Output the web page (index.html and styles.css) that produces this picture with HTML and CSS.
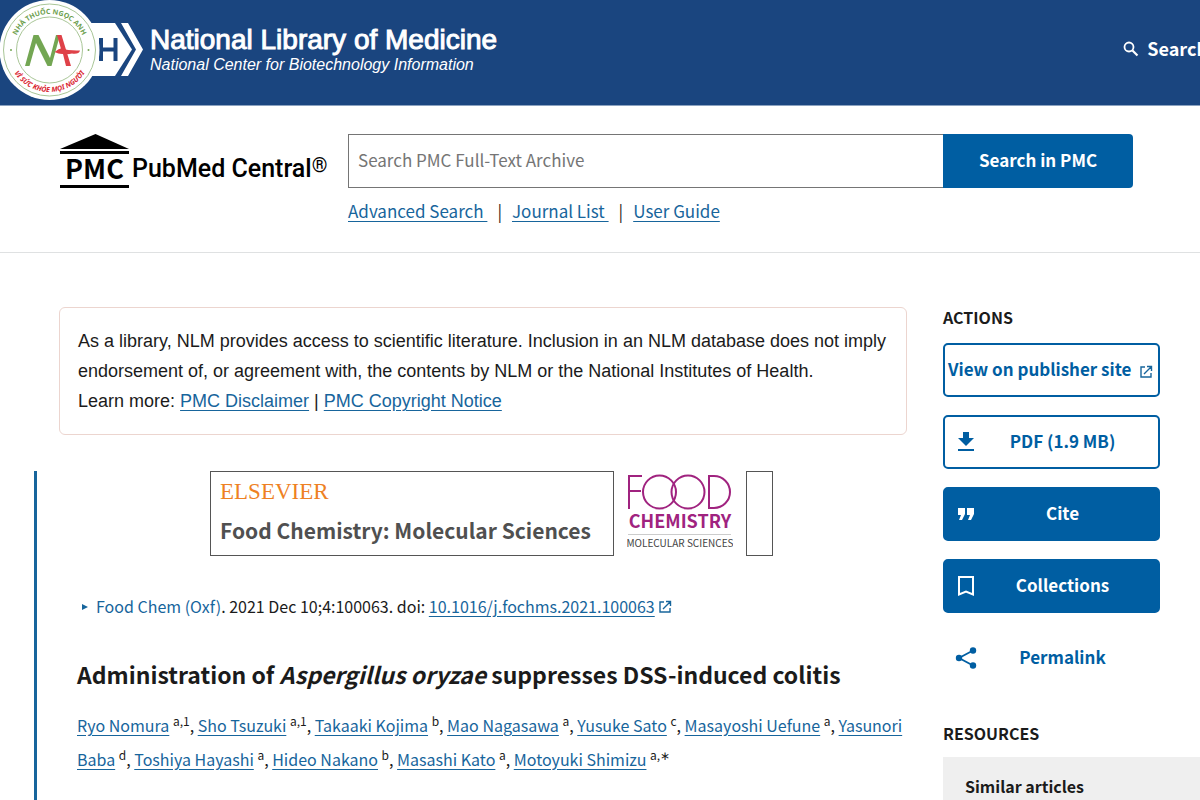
FILE: index.html
```html
<!DOCTYPE html>
<html lang="en">
<head>
<meta charset="utf-8">
<title>Administration of Aspergillus oryzae suppresses DSS-induced colitis - PMC</title>
<link rel="stylesheet" href="styles.css">
</head>
<body>
<header class="banner">
  <a class="brand" href="#">
    <svg class="nih-mark" viewBox="0 0 144 105" role="img" aria-label="NIH">
      <path d="M60 23H115L132 49.500L115 76H60Z" fill="#fff"/>
      <path d="M121 23H128L143 49.500L128 76H121L136 49.500Z" fill="#fff"/>
      <path d="M101 38V61M115.500 38V61M101 49.500H115.500" stroke="#1a457f" stroke-width="4"/>
      <circle cx="49.500" cy="50" r="50" fill="#fff"/>
      <circle cx="49.500" cy="50" r="46" fill="none" stroke="#a9c697" stroke-width="1"/>
      <circle cx="49.500" cy="50" r="33" fill="none" stroke="#a9c697" stroke-width="1"/>
      <path id="arc-top" d="M13.500 50A36 36 0 0 1 85.500 50" fill="none"/>
      <path id="arc-bottom" d="M7.500 50A42 42 0 0 0 91.500 50" fill="none"/>
      <text class="seal-green"><textPath href="#arc-top" startOffset="50%" text-anchor="middle">NHÀ THUỐC NGỌC ANH</textPath></text>
      <text class="seal-red"><textPath href="#arc-bottom" startOffset="50%" text-anchor="middle">VÌ SỨC KHỎE MỌI NGƯỜI</textPath></text>
      <circle cx="11" cy="50" r="1" fill="#73a653"/><circle cx="88.500" cy="50" r="1" fill="#73a653"/>
      <path d="M25 66L33.500 35H38.500L50 58L56 35H60L51.500 66H47.500L36 43L29.500 66Z" fill="#73a653"/>
      <path d="M57 35H61.500L71 66H66L63 54Q58 54 54.500 52L59 49H61Z" fill="#df4148"/>
      <path d="M60 48.500Q70 51 80 50.500Q79 54.500 72 53.500Q66 55 59 53Z" fill="#df4148"/>
    </svg>
    <span class="brand-text">
      <span class="brand-name">National Library of Medicine</span>
      <span class="brand-sub">National Center for Biotechnology Information</span>
    </span>
  </a>
  <a class="banner-search" href="#">
    <svg class="icon-search" viewBox="0 0 16 16" aria-hidden="true"><circle cx="6" cy="6" r="4.500" fill="none" stroke="currentColor" stroke-width="1.800"/><path d="M9.500 9.500L14.500 14.500" stroke="currentColor" stroke-width="2.200"/></svg>
    <span>Search</span>
  </a>
</header>

<section class="finder">
  <a class="pmc-logo" href="#" aria-label="PMC PubMed Central">
    <span class="pmc-temple">
      <svg viewBox="0 0 69 20" aria-hidden="true"><path d="M0 15L35.500 0L69 15Z"/><path d="M0 17H69V20H0Z"/></svg>
      <span class="pmc-word">PMC</span>
    </span>
    <span class="pmc-name">PubMed Central<sup>®</sup></span>
  </a>
  <div class="finder-main">
    <form class="finder-form">
      <input class="finder-input" type="text" placeholder="Search PMC Full-Text Archive" aria-label="Search PMC Full-Text Archive">
      <button class="finder-button" type="button">Search in PMC</button>
    </form>
    <nav class="finder-links">
      <a href="#">Advanced Search </a><span>|</span><a href="#">Journal List </a><span>|</span><a href="#">User Guide</a>
    </nav>
  </div>
</section>

<main class="page">
  <div class="content">
    <p class="notice">As a library, NLM provides access to scientific literature. Inclusion in an NLM database does not imply endorsement of, or agreement with, the contents by NLM or the National Institutes of Health.<br>Learn more: <a href="#">PMC Disclaimer</a> | <a href="#">PMC Copyright Notice</a></p>
    <article class="article">
      <div class="journal">
        <div class="journal-box">
          <span class="elsevier">ELSEVIER</span>
          <span class="journal-name">Food Chemistry: Molecular Sciences</span>
        </div>
        <svg class="journal-logo" viewBox="0 0 106 85" role="img" aria-label="Food Chemistry Molecular Sciences">
          <g fill="none" stroke="#a0237f" stroke-width="2">
            <path d="M2 38V5H15M2 20H14"/>
            <circle cx="32.500" cy="21" r="16.500"/>
            <circle cx="61" cy="21" r="16.500"/>
            <path d="M82 5V37H87A16 16 0 0 0 87 5Z"/>
          </g>
          <text class="logo-chem" x="53" y="57" text-anchor="middle">CHEMISTRY</text>
          <path d="M1 63.500H104" stroke="#ccc" stroke-width="1"/>
          <text class="logo-mol" x="53" y="76" text-anchor="middle">MOLECULAR SCIENCES</text>
        </svg>
        <div class="journal-blank"></div>
      </div>
      <p class="citation"><span class="marker"></span><a class="plain" href="#">Food Chem (Oxf)</a>. 2021 Dec 10;4:100063. doi: <a href="#">10.1016/j.fochms.2021.100063</a><svg class="icon-ext" viewBox="0 0 14 14" aria-hidden="true"><path d="M6 2H2V12H12V8M8 1.500H12.500V6M12 2L5 9" fill="none" stroke="currentColor" stroke-width="1.400"/></svg></p>
      <h1 class="title">Administration of <i>Aspergillus oryzae</i> suppresses DSS-induced colitis</h1>
      <p class="authors"><a href="#">Ryo Nomura</a> <sup>a,1</sup>, <a href="#">Sho Tsuzuki</a> <sup>a,1</sup>, <a href="#">Takaaki Kojima</a> <sup>b</sup>, <a href="#">Mao Nagasawa</a> <sup>a</sup>, <a href="#">Yusuke Sato</a> <sup>c</sup>, <a href="#">Masayoshi Uefune</a> <sup>a</sup>, <a href="#">Yasunori Baba</a> <sup>d</sup>, <a href="#">Toshiya Hayashi</a> <sup>a</sup>, <a href="#">Hideo Nakano</a> <sup>b</sup>, <a href="#">Masashi Kato</a> <sup>a</sup>, <a href="#">Motoyuki Shimizu</a> <sup>a,∗</sup></p>
    </article>
  </div>
  <aside class="side">
    <h2 class="side-title">ACTIONS</h2>
    <div class="actions">
      <a class="action outline publisher" href="#"><span>View on publisher site</span><svg class="icon-ext" viewBox="0 0 14 14" aria-hidden="true"><path d="M6 2H2V12H12V8M8 1.500H12.500V6M12 2L5 9" fill="none" stroke="currentColor" stroke-width="1.400"/></svg></a>
      <a class="action outline" href="#"><svg class="icon" viewBox="0 0 24 24" aria-hidden="true"><path d="M9 2H15V8H20L12 16L4 8H9ZM4 19H20V21H4Z" fill="currentColor"/></svg><span>PDF (1.9 MB)</span></a>
      <button class="action solid" type="button"><svg class="icon" viewBox="0 0 24 24" aria-hidden="true"><path d="M4 6H11V12L8 18H5L7 13H4ZM13 6H20V12L17 18H14L16 13H13Z" fill="currentColor"/></svg><span>Cite</span></button>
      <button class="action solid" type="button"><svg class="icon" viewBox="0 0 24 24" aria-hidden="true"><path d="M5 3H19V20.500L12 17.500L5 20.500Z" fill="none" stroke="currentColor" stroke-width="2"/></svg><span>Collections</span></button>
      <button class="action bare" type="button"><svg class="icon" viewBox="0 0 24 24" aria-hidden="true"><path d="M19 4.500L5 12L19 19.500" fill="none" stroke="currentColor" stroke-width="1.800"/><g fill="currentColor"><circle cx="19" cy="4.500" r="3.200"/><circle cx="5" cy="12" r="3.200"/><circle cx="19" cy="19.500" r="3.200"/></g></svg><span>Permalink</span></button>
    </div>
    <h2 class="side-title">RESOURCES</h2>
    <div class="resource">Similar articles</div>
  </aside>
</main>
</body>
</html>
```

FILE: styles.css
```css
* { box-sizing: border-box; }

body {
  margin: 0;
  min-height: 100vh;
  display: flex;
  flex-direction: column;
  overflow-x: hidden;
  background: #fff;
  color: #1b1b1b;
  font-family: "Noto Sans CJK SC", "Noto Sans", sans-serif;
  font-size: 17px;
  line-height: 24px;
}

a { color: #17659c; text-underline-offset: 3px; }
p, h1, h2 { margin: 0; }

.banner {
  display: flex;
  justify-content: space-between;
  align-items: flex-start;
  height: 106px;
  overflow: hidden;
  background: #1a457f;
  border-bottom: 1px solid #8ba2c0;
}
.brand { display: flex; gap: 6px; color: #fff; text-decoration: none; }
.nih-mark { width: 144px; height: 105px; }
.seal-green { font: bold 7px "Noto Sans", sans-serif; fill: #6da04e; }
.seal-red { font: italic bold 7px "Noto Sans", sans-serif; fill: #d9232e; }
.brand-text {
  display: flex;
  flex-direction: column;
  padding-top: 24px;
  font-family: "Liberation Sans", Arial, sans-serif;
  white-space: nowrap;
}
.brand-name { font-size: 28px; line-height: 32px; -webkit-text-stroke: 1px #fff; }
.brand-sub { font-size: 16px; line-height: 18px; font-style: italic; }
.banner-search {
  display: flex;
  align-items: center;
  gap: 8px;
  margin: 36px -8px 0 0;
  color: #fff;
  font-size: 18px;
  font-weight: 700;
  text-decoration: none;
}
.icon-search { width: 16px; height: 16px; margin-top: 2px; }

.finder {
  display: flex;
  gap: 18px;
  padding: 28px 67px 29px 60px;
  border-bottom: 1px solid #dfe1e2;
}
.pmc-logo { display: flex; gap: 3px; width: 270px; flex: none; color: #000; text-decoration: none; }
.pmc-temple { display: flex; flex-direction: column; width: 69px; height: 54px; border-bottom: 3px solid #000; }
.pmc-word { font-size: 27px; line-height: 28px; font-weight: 700; text-align: center; }
.pmc-name {
  padding-top: 19px;
  font-family: Roboto, sans-serif;
  font-size: 25px;
  line-height: 32px;
  font-weight: 500;
  white-space: nowrap;
}
.pmc-name sup { font-size: 20px; line-height: 0; vertical-align: 5px; font-weight: 400; }
.finder-main { flex: 1; }
.finder-form { display: flex; height: 54px; }
.finder-input {
  flex: 1;
  min-width: 0;
  padding: 0 9px 2px;
  border: 1px solid #757575;
  border-right: 0;
  font: inherit;
}
.finder-input::placeholder { color: #757575; }
.finder-button {
  width: 190px;
  padding: 0 0 2px;
  border: 0;
  border-radius: 0 4px 4px 0;
  background: #005ea2;
  color: #fff;
  font: inherit;
  font-weight: 700;
}
.finder-links { display: flex; gap: 10px; padding-top: 11px; white-space: pre; }

.page { flex: 1; display: flex; gap: 36px; padding: 54px 0 0 34px; }
.content { flex: 1; display: flex; flex-direction: column; gap: 36px; }
.notice {
  margin-left: 25px;
  padding: 18px;
  border: 1px solid #ecd5cf;
  border-radius: 6px;
  font-family: "Liberation Sans", Arial, sans-serif;
  font-size: 18px;
  line-height: 30px;
}
.article { flex: 1; padding-left: 40px; border-left: 3px solid #17659c; }
.journal { display: flex; gap: 13px; margin-left: 133px; }
.journal-box {
  display: flex;
  flex-direction: column;
  gap: 12px;
  width: 404px;
  height: 85px;
  padding: 8px 9px;
  border: 1px solid #555;
}
.elsevier { color: #ee8123; font-family: "Liberation Serif", serif; font-size: 23px; line-height: 24px; }
.journal-name { color: #505050; font-size: 21px; line-height: 28px; font-weight: 700; white-space: nowrap; }
.journal-logo { width: 106px; height: 85px; }
.logo-chem { font: bold 18px "Noto Sans CJK SC", sans-serif; fill: #a0237f; }
.logo-mol { font: 10px "Noto Sans CJK SC", sans-serif; fill: #444; }
.journal-blank { width: 27px; height: 85px; border: 1px solid #555; }
.citation { display: flex; align-items: center; padding-top: 38px; font-size: 16px; white-space: pre; }
.marker {
  margin: 1px 8px 0 5px;
  border: 3px solid transparent;
  border-left: 6px solid #17659c;
  border-right: 0;
}
.plain { text-decoration: none; }
.icon-ext { width: 14px; height: 14px; margin: 2px 0 0 3px; color: #17659c; }
.title { padding-top: 40px; font-size: 23px; line-height: 32px; font-weight: 700; }
.authors { padding-top: 18px; font-size: 16px; line-height: 34px; }
.authors sup { font-size: 12px; line-height: 0; }

.side { width: 257px; display: flex; flex-direction: column; }
.side-title { font-size: 16px; line-height: 20px; font-weight: 700; }
.actions { display: flex; flex-direction: column; gap: 18px; width: 217px; padding: 16px 0 38px; }
.action {
  display: flex;
  align-items: center;
  width: 100%;
  height: 54px;
  padding: 0 11px 0 9px;
  border: 2px solid #005ea2;
  border-radius: 5px;
  background: #fff;
  color: #005ea2;
  font: inherit;
  font-weight: 700;
  text-decoration: none;
}
.action span { flex: 1; padding-bottom: 2px; text-align: center; }
.action.publisher { padding: 0 5px 0 3px; white-space: nowrap; }
.action.publisher span { text-align: left; }
.action.publisher .icon-ext { margin-top: 4px; }
.action.solid { background: #005ea2; color: #fff; }
.action.bare { border-color: transparent; }
.icon { width: 24px; height: 24px; }
.resource { flex: 1; margin-top: 14px; padding: 17px 22px 0; background: #efefef; font-size: 16px; font-weight: 700; }
```
